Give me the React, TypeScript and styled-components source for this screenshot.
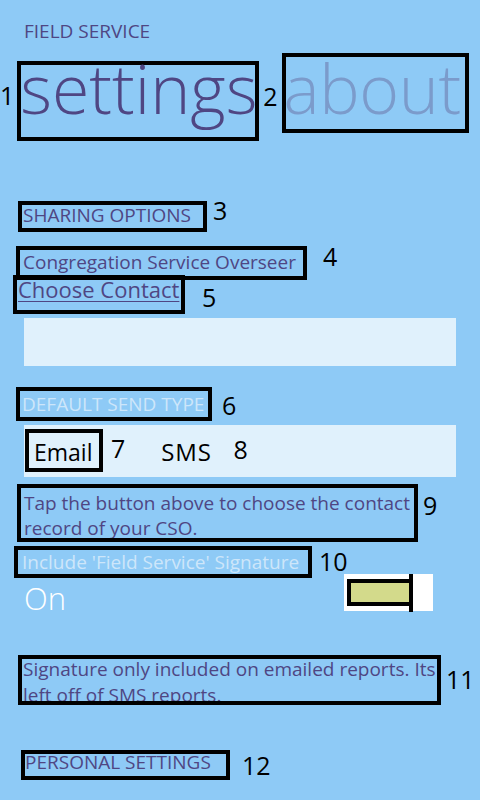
import styled, { createGlobalStyle } from 'styled-components';

const GlobalStyle = createGlobalStyle`
  html, body {
    margin: 0;
    padding: 0;
    background: #8ecaf6;
  }
`;

export default function App() {
  return (
    <Page>
      <GlobalStyle />
      <AppTitle>FIELD SERVICE</AppTitle>

      <PivotRow>
        <Label $dy={22}>1</Label>
        <Boxed $w={242} $h={80} $ml={3}>
          <PivotItem>settings</PivotItem>
        </Boxed>
        <Label $dx={4} $dy={23}>2</Label>
        <Boxed $w={187} $h={80} $ml={4} $mt={-8}>
          <PivotItem $inactive>about</PivotItem>
        </Boxed>
      </PivotRow>

      <Row $x={18} $top={60}>
        <Boxed $w={189} $h={31} $pl={1}>
          <Heading $lh={21}>SHARING OPTIONS</Heading>
        </Boxed>
        <Label $dx={6} $dy={-3}>3</Label>
      </Row>

      <Row $x={16} $top={14}>
        <Boxed $w={291} $h={34} $pl={3}>
          <Heading $lh={25} $case="none">Congregation Service Overseer</Heading>
        </Boxed>
        <Label $dx={16} $dy={-2}>4</Label>
      </Row>

      <Row $x={13} $top={-5}>
        <Boxed $w={172} $h={39} $pl={1}>
          <LinkText>Choose Contact</LinkText>
        </Boxed>
        <Label $dx={17} $dy={10}>5</Label>
      </Row>

      <InputBox />

      <Row $x={16} $top={21}>
        <Boxed $w={196} $h={34} $pl={2}>
          <Heading $lh={27} $light>DEFAULT SEND TYPE</Heading>
        </Boxed>
        <Label $dx={10} $dy={6}>6</Label>
      </Row>

      <SendTypes>
        <Boxed $w={78} $h={43} $pl={5}>
          <SendOption $lh={38}>Email</SendOption>
        </Boxed>
        <Label $dx={8} $dy={7}>7</Label>
        <SendOption $lh={46} $ml={36} $wide>SMS</SendOption>
        <Label $dx={22} $dy={8}>8</Label>
      </SendTypes>

      <Row $x={17} $top={7}>
        <Boxed $w={401} $h={58} $pl={3} $clip>
          <Note $lh={25} $shift={3}>
            Tap the button above to choose the contact
            <br />
            record of your CSO.
          </Note>
        </Boxed>
        <Label $dx={5} $dy={9}>9</Label>
      </Row>

      <Row $x={14} $top={4}>
        <Boxed $w={298} $h={32} $pl={4}>
          <Heading $lh={25} $case="none" $light>
            Include 'Field Service' Signature
          </Heading>
        </Boxed>
        <Label $dx={7} $dy={3}>10</Label>
      </Row>

      <ToggleRow>
        <ToggleState>On</ToggleState>
        <Switch>
          <SwitchTrack />
          <SwitchThumb />
        </Switch>
      </ToggleRow>

      <Row $x={18} $top={43}>
        <Boxed $w={423} $h={50} $pl={1} $clip>
          <Note $lh={26} $shift={-3}>
            Signature only included on emailed reports. Its
            <br />
            left off of SMS reports.
          </Note>
        </Boxed>
        <Label $dx={5} $dy={12}>11</Label>
      </Row>

      <Row $x={21} $top={45}>
        <Boxed $w={209} $h={30} $pl={0}>
          <Heading $lh={17}>PERSONAL SETTINGS</Heading>
        </Boxed>
        <Label $dx={12} $dy={3}>12</Label>
      </Row>
    </Page>
  );
}

const ink = '#4f4683';
const pale = '#cde6fa';

const Page = styled.div`
  width: 480px;
  height: 800px;
  overflow: hidden;
  display: flex;
  flex-direction: column;
  align-items: flex-start;
  background: #8ecaf6;
  font-family: 'Open Sans', 'Noto Sans', sans-serif;
  color: ${ink};
`;

const AppTitle = styled.div`
  padding: 20px 0 0 24px;
  font-size: 19px;
  line-height: 22px;
  color: ${ink};
`;

const PivotRow = styled.div`
  display: flex;
  align-items: flex-start;
  margin-top: 19px;
`;

const Row = styled.div<{ $x: number; $top: number }>`
  display: flex;
  align-items: flex-start;
  margin-top: ${p => p.$top}px;
  margin-left: ${p => p.$x}px;
`;

// black annotation frame drawn round a control
const Boxed = styled.div<{
  $w: number;
  $h: number;
  $ml?: number;
  $mt?: number;
  $pl?: number;
  $clip?: boolean;
}>`
  flex: none;
  display: flex;
  flex-direction: column;
  box-sizing: border-box;
  width: ${p => p.$w}px;
  height: ${p => p.$h}px;
  margin-left: ${p => p.$ml ?? 0}px;
  margin-top: ${p => p.$mt ?? 0}px;
  padding-left: ${p => p.$pl ?? 0}px;
  border: 4px solid #000;
  overflow: ${p => (p.$clip ? 'hidden' : 'visible')};
  white-space: nowrap;
`;

const Label = styled.span<{ $dx?: number; $dy?: number }>`
  flex: none;
  margin-left: ${p => p.$dx ?? 0}px;
  margin-top: ${p => p.$dy ?? 0}px;
  font-family: 'Open Sans', sans-serif;
  font-size: 25px;
  line-height: 25px;
  color: #000;
`;

const PivotItem = styled.div<{ $inactive?: boolean }>`
  font-size: 68px;
  font-weight: 300;
  line-height: 72px;
  margin: ${p => (p.$inactive ? '-5px 0 0 -2px' : '-13px 0 0 -1px')};
  letter-spacing: ${p => (p.$inactive ? '-0.4px' : '0')};
  color: ${p => (p.$inactive ? '#7b9bcb' : ink)};
`;

const Heading = styled.div<{ $lh: number; $light?: boolean; $case?: string }>`
  font-size: 19px;
  line-height: ${p => p.$lh}px;
  text-transform: ${p => p.$case ?? 'uppercase'};
  color: ${p => (p.$light ? pale : ink)};
`;

const LinkText = styled.div`
  font-size: 22px;
  line-height: 21px;
  text-decoration: underline;
  text-decoration-thickness: 1px;
  text-underline-offset: 3px;
  color: ${ink};
`;

const InputBox = styled.div`
  width: 432px;
  height: 48px;
  margin: 4px 0 0 24px;
  background: #e0f1fc;
`;

const SendTypes = styled.div`
  display: flex;
  align-items: flex-start;
  width: 432px;
  height: 52px;
  margin: 4px 0 0 24px;
  padding: 4px 0 0 1px;
  box-sizing: border-box;
  background: #e0f1fc;
`;

const SendOption = styled.div<{ $lh: number; $ml?: number; $wide?: boolean }>`
  font-size: ${p => (p.$wide ? 24 : 23)}px;
  line-height: ${p => p.$lh}px;
  margin-left: ${p => p.$ml ?? 0}px;
  letter-spacing: ${p => (p.$wide ? '0.8px' : '0')};
  color: #000;
`;

const Note = styled.div<{ $lh: number; $shift: number }>`
  margin-top: ${p => p.$shift}px;
  font-size: 19px;
  line-height: ${p => p.$lh}px;
  color: ${ink};
`;

const ToggleRow = styled.div`
  display: flex;
  align-items: flex-start;
  justify-content: space-between;
  width: 409px;
  height: 38px;
  margin: -4px 0 0 24px;
`;

const ToggleState = styled.div`
  font-size: 31px;
  font-weight: 300;
  line-height: 49px;
  color: #fff;
`;

const Switch = styled.div`
  position: relative;
  width: 89px;
  height: 37px;
  padding: 5px 0 0 3px;
  box-sizing: border-box;
  background: #fff;
`;

const SwitchTrack = styled.div`
  width: 66px;
  height: 27px;
  box-sizing: border-box;
  border: 4px solid #000;
  background: #d3da8b;
`;

const SwitchThumb = styled.div`
  position: absolute;
  left: 65px;
  top: 0;
  width: 4px;
  height: 38px;
  background: #000;
`;
